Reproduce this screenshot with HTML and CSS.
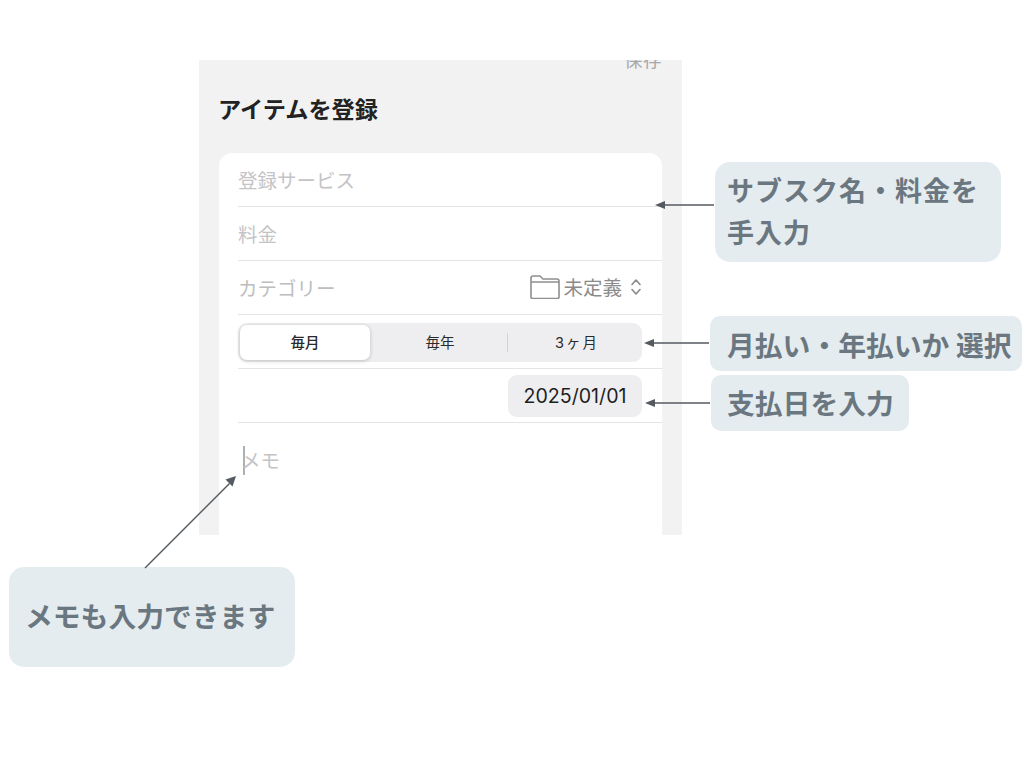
FILE: index.html
```html
<!DOCTYPE html>
<html lang="ja">
<head>
<meta charset="utf-8">
<title>アイテムを登録</title>
<link rel="stylesheet" href="styles.css">
</head>
<body>
<main class="slide">
  <section class="screen">
    <div class="save"><span>保存</span></div>
    <h1 class="title">アイテムを登録</h1>
    <div class="card">
      <div class="row"><span class="placeholder">登録サービス</span></div>
      <div class="row"><span class="placeholder">料金</span></div>
      <div class="row row-between">
        <span class="placeholder">カテゴリー</span>
        <span class="picker">
          <svg class="folder" width="30" height="24" viewBox="0 0 30 24" fill="none" stroke="#8f8f8f" stroke-width="1.6" stroke-linejoin="round"><path d="M1 7V3a2 2 0 0 1 2-2h7l3 3h14a2 2 0 0 1 2 2v16a1.500 1.500 0 0 1-1.500 1.500H2.500A1.500 1.500 0 0 1 1 22V7h28"/></svg>
          <span class="picker-label">未定義</span>
          <svg class="chevrons" width="12" height="18" viewBox="0 0 12 18" fill="none" stroke="#8a8a8a" stroke-width="1.600" stroke-linecap="round" stroke-linejoin="round"><path d="M2 6.500 6 2l4 4.500M2 11.500 6 16l4-4.500"/></svg>
        </span>
      </div>
      <div class="row row-seg">
        <div class="segments">
          <span class="segment selected">毎月</span>
          <span class="segment">毎年</span>
          <span class="segment divided">3ヶ月</span>
        </div>
      </div>
      <div class="row row-end"><span class="date">2025/01/01</span></div>
      <div class="memo"><span class="caret"></span><span class="memo-text">メモ</span></div>
    </div>
  </section>

  <div class="bubble b1">サブスク名・料金を<br>手入力</div>
  <div class="bubble b2">月払い・年払いか 選択</div>
  <div class="bubble b3">支払日を入力</div>
  <div class="bubble b4">メモも入力できます</div>

  <svg class="arrows" width="1024" height="768" viewBox="0 0 1024 768" fill="#555a60" stroke="none">
    <path d="M665 204.300h49v1.400h-49z"/><path d="M655 205l10-4v8z"/>
    <path d="M654 342.300h55v1.400h-55z"/><path d="M644 343l10-4v8z"/>
    <path d="M655 402.300h55v1.400h-55z"/><path d="M645 403l10-4v8z"/>
    <path d="M144.500 567.500 229 483l1 1-84.500 84.500z"/><path d="M236 476l-3.500 10.500-7-7z"/>
  </svg>
</main>
</body>
</html>
```
FILE: styles.css
```css
* { box-sizing: border-box; }
html, body { margin: 0; padding: 0; background: #fff; }
body { font-family: "Inter", "Noto Sans CJK JP", sans-serif; }
.slide { position: relative; width: 1024px; height: 768px; overflow: hidden; background: #fff; }

.screen {
  position: absolute; left: 199px; top: 60px; width: 483px; height: 475px;
  background: #f2f2f3; overflow: hidden; padding: 0 20px;
  display: flex; flex-direction: column;
}
.save { height: 11px; display: flex; justify-content: flex-end; align-items: flex-end; }
.save span { font-size: 18.500px; line-height: 22px; letter-spacing: .5px; color: #a9a9a9; flex: none; }
.title {
  margin: 24px 0 0 -1px; height: 30px; font-size: 23.200px; line-height: 30px; font-weight: 700; color: #222;
}
.card {
  margin-top: 28px; flex: 1; background: #fff; border-radius: 13px 13px 0 0; padding-left: 19px;
}
.row {
  height: 54px; border-bottom: 1px solid #e4e4e4; display: flex; align-items: center;
  padding-right: 20px; font-size: 19.500px;
}
.row-between { justify-content: space-between; }
.row-end { justify-content: flex-end; }
.placeholder { color: #c4c4c6; }
.row-between .placeholder { color: #bdbdbf; }
.picker { display: flex; align-items: center; gap: 3px; }
.folder { margin-top: -2px; }
.picker-label { color: #8b8b8b; font-size: 19.500px; margin-top: -2px; }
.chevrons { margin-left: 5px; margin-top: -2px; }
.segments {
  width: 404px; height: 39px; margin-top: 2px; background: #eeeef0; border-radius: 9px; padding: 2px;
  display: grid; grid-template-columns: 130px 1fr 1fr; align-items: stretch;
}
.segment {
  display: flex; align-items: center; justify-content: center; font-size: 14.500px; font-weight: 400;
  color: #2a2a2a; padding-bottom: 2px;
}
.segment:nth-child(2) { padding-left: 5px; }
.segment.selected {
  background: #fff; border-radius: 7px; box-shadow: 0 1px 4px rgba(0, 0, 0, .2); font-weight: 500;
}
.segment.divided { position: relative; letter-spacing: 2px; padding-left: 9px; }
.segment.divided::before {
  content: ""; position: absolute; left: 2px; top: 8px; bottom: 8px; width: 1px; background: #d4d4d6;
}
.date {
  width: 134px; height: 42px; background: #eeeef0; border-radius: 9px; display: flex; padding-top: 1px;
  align-items: center; justify-content: center; font-family: "Inter", sans-serif; font-size: 19.600px; color: #1e1e1e;
}
.memo { display: flex; align-items: center; height: 37px; margin-top: 18px; padding-left: 5px; position: relative; }
.caret { width: 2px; height: 29px; background: #b0b0b0; flex: none; margin-top: 2px; }
.memo-text { margin-left: -4px; color: #c4c4c6; font-size: 19.500px; }

.bubble {
  position: absolute; background: #e4ecef; color: #6b7780; font-weight: 700; font-size: 27.800px;
  display: flex; align-items: center; white-space: nowrap;
}
.b1 { left: 715px; top: 162px; width: 286px; height: 100px; border-radius: 15px; padding: 9px 0 0 12px; line-height: 42px; display: block; letter-spacing: 1px; font-size: 27px; }
.b2 { left: 710px; top: 316px; width: 312px; height: 55px; border-radius: 10px; padding-left: 17px; }
.b3 { left: 711px; top: 375px; width: 198px; height: 56px; border-radius: 10px; padding: 0 0 3px 16px; }
.b4 { left: 9px; top: 567px; width: 286px; height: 100px; border-radius: 15px; padding: 0 0 4px 16px; }
.arrows { position: absolute; left: 0; top: 0; pointer-events: none; }
```
